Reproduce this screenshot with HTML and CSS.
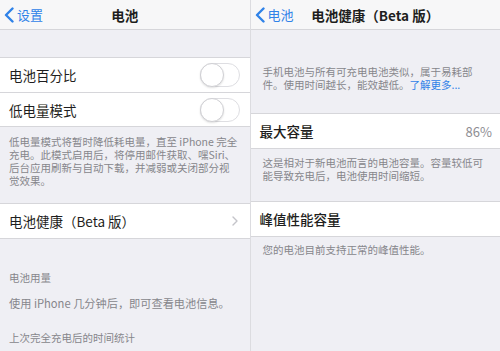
FILE: index.html
```html
<!DOCTYPE html>
<html lang="zh-CN">
<head>
    <meta charset="UTF-8">
    <title>电池</title>
    <link rel="stylesheet" href="styles.css">
</head>
<body>
<div class="screens">
    <!-- left screen: 电池 -->
    <div class="screen">
        <div class="navbar">
            <div class="back">
                <svg class="chevron" width="10" height="16" viewBox="0 0 10 16"><path d="M8.5 1.5 L2 8 L8.5 14.5" fill="none" stroke="currentColor" stroke-width="2.4" stroke-linecap="round" stroke-linejoin="round"/></svg>
                <span>设置</span>
            </div>
            <div class="title">电池</div>
        </div>

        <div class="group first-group">
            <div class="row">
                <span class="label">电池百分比</span>
                <span class="switch"><span class="knob"></span></span>
            </div>
            <div class="row">
                <span class="label">低电量模式</span>
                <span class="switch"><span class="knob"></span></span>
            </div>
        </div>
        <div class="note note-low">
            低电量模式将暂时降低耗电量，直至 iPhone 完全<br>
            充电。此模式启用后，将停用邮件获取、嘿Siri、<br>
            后台应用刷新与自动下载，并减弱或关闭部分视<br>
            觉效果。
        </div>

        <div class="group">
            <div class="row">
                <span class="label">电池健康（Beta 版）</span>
                <svg class="disclosure" width="6" height="10" viewBox="0 0 6 10"><path d="M1 1 L5 5 L1 9" fill="none" stroke="currentColor" stroke-width="1.4" stroke-linecap="round" stroke-linejoin="round"/></svg>
            </div>
        </div>

        <div class="usage">
            <div class="usage-head">电池用量</div>
            <div class="usage-text">使用 iPhone 几分钟后，即可查看电池信息。</div>
            <div class="usage-head usage-last">上次完全充电后的时间统计</div>
        </div>
    </div>

    <div class="divider"></div>

    <!-- right screen: 电池健康 -->
    <div class="screen">
        <div class="navbar">
            <div class="back">
                <svg class="chevron" width="10" height="16" viewBox="0 0 10 16"><path d="M8.5 1.5 L2 8 L8.5 14.5" fill="none" stroke="currentColor" stroke-width="2.4" stroke-linecap="round" stroke-linejoin="round"/></svg>
                <span>电池</span>
            </div>
            <div class="title">电池健康（Beta 版）</div>
        </div>

        <div class="note note-intro">
            手机电池与所有可充电电池类似，属于易耗部<br>
            件。使用时间越长，能效越低。<span class="link">了解更多...</span>
        </div>

        <div class="group">
            <div class="row">
                <span class="label strong">最大容量</span>
                <span class="value">86%</span>
            </div>
        </div>
        <div class="note note-capacity">
            这是相对于新电池而言的电池容量。容量较低可<br>
            能导致充电后，电池使用时间缩短。
        </div>

        <div class="group">
            <div class="row">
                <span class="label strong">峰值性能容量</span>
            </div>
        </div>
        <div class="note note-peak">
            您的电池目前支持正常的峰值性能。
        </div>
    </div>
</div>
</body>
</html>
```

FILE: styles.css
```css
/* --------------------
 iOS settings, two screens side by side
 -------------------- */

:root {
    --bg-color: #efeff4;
    --nav-color: #f7f7f8;
    --line-color: #d6d6da;
    --text-color: #1e1e20;
    --note-color: #86868b;
    --blue: #2f82e8;
}

* {
    box-sizing: border-box;
}

body {
    margin: 0;
    width: 500px;
    height: 351px;
    overflow: hidden;
    font-family: "Noto Sans CJK SC", "Noto Sans", sans-serif;
    color: var(--text-color);
    background-color: var(--bg-color);
}

.screens {
    display: flex;
    height: 351px;
}

.screen {
    flex: 1;
    background-color: var(--bg-color);
}

.divider {
    width: 1px;
    background-color: #dcdce0;
}

.navbar {
    position: relative;
    height: 30px;
    display: flex;
    align-items: center;
    justify-content: center;
    background-color: var(--nav-color);
    border-bottom: 1px solid var(--line-color);
}

.back {
    position: absolute;
    left: 4px;
    top: 0;
    height: 29px;
    display: flex;
    align-items: center;
    gap: 3px;
    color: var(--blue);
    font-size: 13px;
}

.chevron {
    display: block;
}

.title {
    font-size: 13.5px;
    font-weight: 700;
}

.group {
    background-color: #fff;
    border-top: 1px solid var(--line-color);
    border-bottom: 1px solid var(--line-color);
}

.first-group {
    margin-top: 27px;
}

.row {
    height: 34px;
    display: flex;
    align-items: center;
    justify-content: space-between;
    padding: 0 10px 0 9px;
}

.row + .row {
    border-top: 1px solid var(--line-color);
}

.label {
    font-size: 13.5px;
}

.label.strong {
    font-weight: 500;
}

.value {
    font-size: 13px;
    color: #8e8e93;
    margin-right: -2px;
}

.switch {
    position: relative;
    width: 40px;
    height: 24px;
    border-radius: 12px;
    border: 1px solid #dedee2;
    background-color: #fff;
}

.knob {
    position: absolute;
    left: -1px;
    top: -1px;
    width: 24px;
    height: 24px;
    border-radius: 50%;
    background-color: #fff;
    border: 1px solid #d0d0d4;
    box-shadow: 0 1px 2px rgba(0, 0, 0, 0.12);
}

.disclosure {
    color: #c4c4c9;
    margin-right: 2px;
}

.note {
    font-size: 10.5px;
    line-height: 13px;
    color: var(--note-color);
    padding: 0 9px;
}

.note-low {
    padding-top: 8px;
    padding-bottom: 16px;
}

.note-intro {
    padding: 35px 12px 22px;
}

.note-capacity {
    padding: 7px 12px 19px;
}

.note-peak {
    padding: 6px 12px 0;
}

.link {
    color: var(--blue);
}

.usage {
    padding: 32px 9px 0;
    color: var(--note-color);
}

.usage-head {
    font-size: 10.5px;
    line-height: 14px;
}

.usage-text {
    margin-top: 10px;
    font-size: 11.2px;
    line-height: 16px;
}

.usage-last {
    margin-top: 20px;
}
```
